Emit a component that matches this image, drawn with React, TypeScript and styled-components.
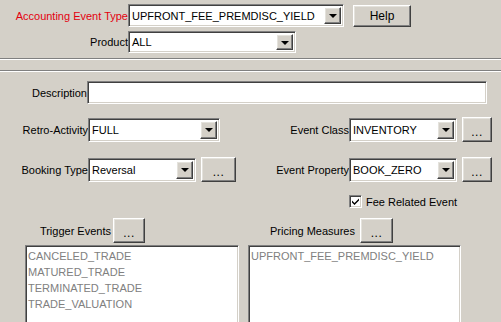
import React from "react";
import styled, { createGlobalStyle, css } from "styled-components";

const GlobalStyle = createGlobalStyle`
  html, body {
    margin: 0;
    padding: 0;
    background: #d4d0c8;
    overflow: hidden;
  }
  body {
    font-family: "Liberation Sans", Arial, sans-serif;
    font-size: 11px;
    color: #000;
  }
`;

const raised = css`
  border: 1px solid;
  border-color: #ffffff #404040 #404040 #ffffff;
  box-shadow: inset -1px -1px #808080, inset 1px 1px #e4e2dc;
  background: #d4d0c8;
`;

const sunken = css`
  border: 1px solid;
  border-color: #808080 #ffffff #ffffff #808080;
  box-shadow: inset 1px 1px #404040, inset -1px -1px #d4d0c8;
  background: #ffffff;
`;

const Page = styled.div`
  width: 501px;
  height: 322px;
  background: #d4d0c8;
  overflow: hidden;
  box-sizing: border-box;
`;

const TopPanel = styled.div`
  height: 58px;
  padding-top: 4px;
  box-sizing: border-box;
  display: flex;
  flex-direction: column;
  gap: 4px;
`;

const Row = styled.div<{ $top?: number; $h: number }>`
  display: flex;
  align-items: center;
  height: ${(p) => p.$h}px;
  margin-top: ${(p) => p.$top ?? 0}px;
`;

const Label = styled.div<{ $w: number; $red?: boolean }>`
  width: ${(p) => p.$w}px;
  flex: none;
  text-align: right;
  white-space: nowrap;
  color: ${(p) => (p.$red ? "#e3000f" : "#000")};
`;

const Separator = styled.div`
  height: 1px;
  background: #808080;
  border-bottom: 1px solid #ffffff;
`;

const Band = styled.div`
  height: 10px;
`;

const ComboBox = styled.div<{ $w: number; $h: number }>`
  ${sunken};
  width: ${(p) => p.$w}px;
  height: ${(p) => p.$h}px;
  box-sizing: border-box;
  flex: none;
  display: flex;
  align-items: stretch;
  padding: 2px;
`;

const ComboText = styled.div`
  flex: 1;
  display: flex;
  align-items: center;
  padding-left: 1px;
  white-space: nowrap;
  overflow: hidden;
`;

const DropButton = styled.div`
  ${raised};
  width: 17px;
  flex: none;
  box-sizing: border-box;
  display: flex;
  align-items: center;
  justify-content: center;
`;

const Arrow = styled.div`
  width: 0;
  height: 0;
  border-left: 4px solid transparent;
  border-right: 4px solid transparent;
  border-top: 4px solid #000;
  margin-top: 1px;
`;

const Button = styled.div<{ $w: number; $h: number; $ml?: number }>`
  ${raised};
  width: ${(p) => p.$w}px;
  height: ${(p) => p.$h}px;
  margin-left: ${(p) => p.$ml ?? 0}px;
  box-sizing: border-box;
  flex: none;
  display: flex;
  align-items: center;
  justify-content: center;
  font-size: 12px;
`;

const Dots = styled.span`
  margin-top: 4px;
  letter-spacing: 0.5px;
`;

const TextField = styled.div<{ $w: number; $h: number }>`
  ${sunken};
  width: ${(p) => p.$w}px;
  height: ${(p) => p.$h}px;
  box-sizing: border-box;
  flex: none;
`;

const Spacer = styled.div<{ $w: number }>`
  width: ${(p) => p.$w}px;
  flex: none;
`;

const CheckBox = styled.div`
  ${sunken};
  width: 13px;
  height: 13px;
  box-sizing: border-box;
  flex: none;
  display: flex;
  align-items: center;
  justify-content: center;
`;

const CheckLabel = styled.div`
  margin-left: 4px;
  white-space: nowrap;
`;

const Lists = styled.div`
  display: flex;
  gap: 9px;
  padding-left: 25px;
  margin-top: 2px;
`;

const ListBox = styled.div<{ $w: number }>`
  ${sunken};
  width: ${(p) => p.$w}px;
  height: 100px;
  box-sizing: border-box;
  padding: 3px 2px;
  color: #808080;
  flex: none;
`;

const ListItem = styled.div`
  height: 16px;
  line-height: 15px;
  white-space: nowrap;
`;

const Combo = ({ w, h, value }: { w: number; h: number; value: string }) => (
  <ComboBox $w={w} $h={h}>
    <ComboText>{value}</ComboText>
    <DropButton>
      <Arrow />
    </DropButton>
  </ComboBox>
);

const DotsButton = ({ w, ml }: { w: number; ml?: number }) => (
  <Button $w={w} $h={25} $ml={ml}>
    <Dots>...</Dots>
  </Button>
);

const triggerEvents = [
  "CANCELED_TRADE",
  "MATURED_TRADE",
  "TERMINATED_TRADE",
  "TRADE_VALUATION",
];

export default function App() {
  return (
    <Page>
      <GlobalStyle />
      <TopPanel>
        <Row $h={23}>
          <Label $w={128} $red>
            Accounting Event Type
          </Label>
          <Combo w={216} h={23} value="UPFRONT_FEE_PREMDISC_YIELD" />
          <Button $w={58} $h={22} $ml={9}>
            Help
          </Button>
        </Row>
        <Row $h={22}>
          <Label $w={128}>Product</Label>
          <Combo w={168} h={22} value="ALL" />
        </Row>
      </TopPanel>
      <Separator />
      <Band />
      <Separator />

      <Row $h={23} $top={9}>
        <Label $w={87}>Description</Label>
        <TextField $w={400} $h={23} />
      </Row>

      <Row $h={25} $top={13}>
        <Label $w={88}>Retro-Activity</Label>
        <Combo w={132} h={24} value="FULL" />
        <Label $w={129}>Event Class</Label>
        <Combo w={108} h={24} value="INVENTORY" />
        <DotsButton w={30} ml={5} />
      </Row>

      <Row $h={25} $top={15}>
        <Label $w={88}>Booking Type</Label>
        <Combo w={108} h={24} value="Reversal" />
        <DotsButton w={35} ml={5} />
        <Label $w={113}>Event Property</Label>
        <Combo w={108} h={24} value="BOOK_ZERO" />
        <DotsButton w={30} ml={5} />
      </Row>

      <Row $h={15} $top={12}>
        <Spacer $w={349} />
        <CheckBox>
          <svg width="9" height="9" viewBox="0 0 9 9">
            <path d="M1 3.5 L3.5 6 L8 1.5 L8 3.5 L3.5 8 L1 5.5 Z" fill="#000" />
          </svg>
        </CheckBox>
        <CheckLabel>Fee Related Event</CheckLabel>
      </Row>

      <Row $h={25} $top={9}>
        <Label $w={111}>Trigger Events</Label>
        <DotsButton w={32} ml={2} />
        <Label $w={210}>Pricing Measures</Label>
        <DotsButton w={33} ml={5} />
      </Row>

      <Lists>
        <ListBox $w={214}>
          {triggerEvents.map((e) => (
            <ListItem key={e}>{e}</ListItem>
          ))}
        </ListBox>
        <ListBox $w={213}>
          <ListItem>UPFRONT_FEE_PREMDISC_YIELD</ListItem>
        </ListBox>
      </Lists>
    </Page>
  );
}
